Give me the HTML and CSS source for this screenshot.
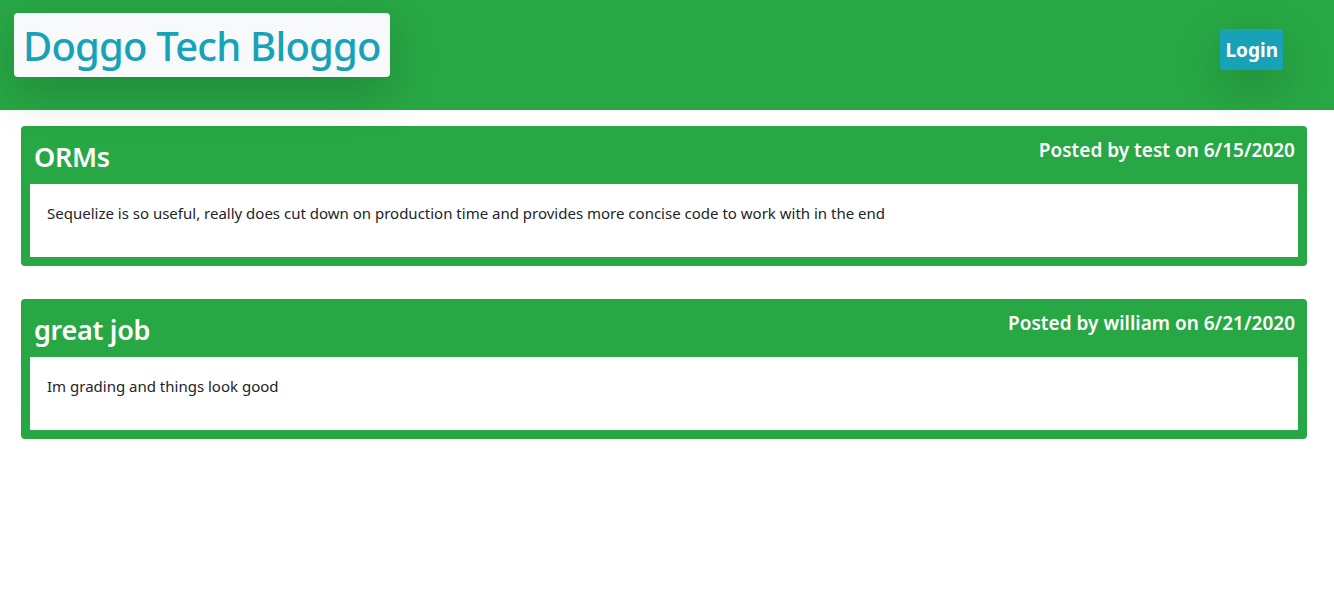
FILE: index.html
```html
<!DOCTYPE html>
<html>
<head>
<meta charset="utf-8">
<link rel="stylesheet" href="styles.css">
</head>
<body>
<nav class="navbar">
  <div class="brand"><h1>Doggo Tech Bloggo</h1></div>
  <button class="login">Login</button>
</nav>
<main class="posts">
  <article class="card">
    <header class="card-head">
      <h2 class="title">ORMs</h2>
      <h5 class="meta">Posted by test on 6/15/2020</h5>
    </header>
    <div class="card-body">
      <p>Sequelize is so useful, really does cut down on production time and provides more concise code to work with in the end</p>
    </div>
  </article>
  <article class="card">
    <header class="card-head">
      <h2 class="title">great job</h2>
      <h5 class="meta">Posted by william on 6/21/2020</h5>
    </header>
    <div class="card-body">
      <p>Im grading and things look good</p>
    </div>
  </article>
</main>
</body>
</html>
```

FILE: styles.css
```css
* { box-sizing: border-box; }
body {
  margin: 0;
  font-family: "Noto Sans", "Open Sans", sans-serif;
  color: #212529;
  background: #fff;
}
.navbar {
  background: #28a745;
  height: 110px;
  display: flex;
  align-items: flex-start;
  justify-content: space-between;
  padding: 13px 51px 0 14px;
  position: relative;
  z-index: 1;
}
.brand {
  background: #f8f9fa;
  border-radius: 4px;
  padding: 2px 9px 0;
  height: 64px;
  display: flex;
  align-items: center;
  box-shadow: 0 16px 48px rgba(0,0,0,0.175);
}
.brand h1 {
  margin: 0;
  font-size: 40px;
  font-weight: 500;
  color: #17a2b8;
  line-height: 1.2;
  letter-spacing: -0.8px;
}
.login {
  margin-top: 16px;
  background: #17a2b8;
  color: #fff;
  border: none;
  border-radius: 3px;
  font-family: inherit;
  font-size: 19px;
  font-weight: 700;
  height: 41px;
  padding: 0 5px;
  box-shadow: 0 16px 48px rgba(0,0,0,0.175);
}
.posts {
  padding: 16px 27px 0 21px;
  display: flex;
  flex-direction: column;
  gap: 33px;
}
.card {
  background: #28a745;
  border-radius: 4px;
  padding: 0 9px 9px;
}
.card-head {
  height: 58px;
  display: flex;
  justify-content: space-between;
  align-items: flex-start;
  color: #fff;
  padding: 0 3px 0 4px;
}
.title {
  margin: 15px 0 0;
  font-size: 27px;
  font-weight: 600;
  line-height: 1.2;
  letter-spacing: -0.3px;
}
.meta {
  margin: 13px 0 0;
  font-size: 19px;
  font-weight: 600;
  line-height: 1.2;
}
.card-body {
  background: #fff;
  height: 73px;
  padding: 18px 17px;
}
.card-body p {
  margin: 0;
  font-size: 15px;
  line-height: 22px;
}
```
